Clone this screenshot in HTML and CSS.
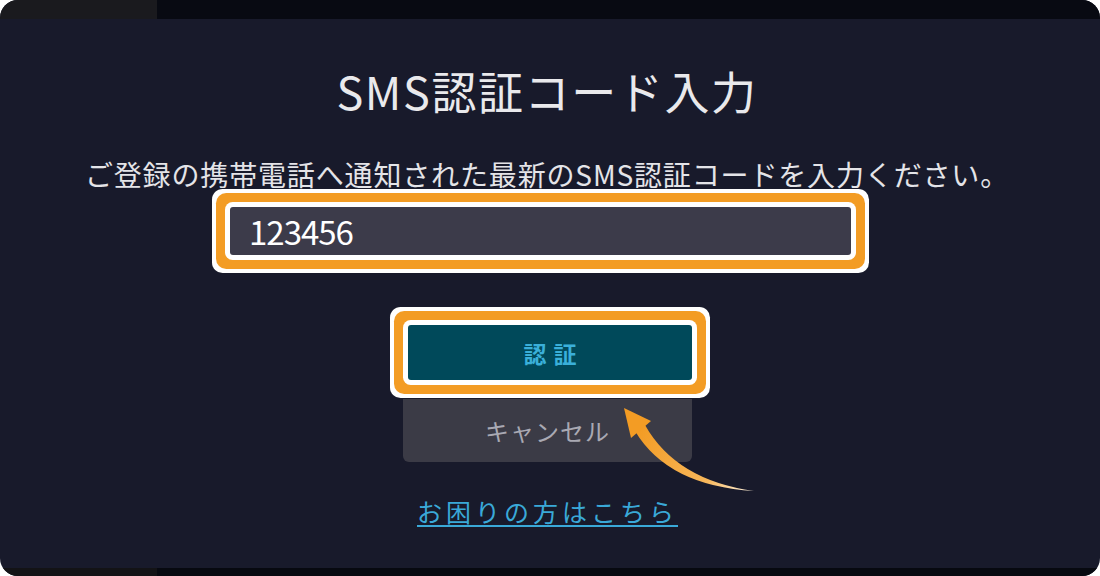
FILE: index.html
```html
<!DOCTYPE html>
<html lang="ja">
<head>
<meta charset="utf-8">
<title>SMS認証コード入力</title>
<link rel="stylesheet" href="styles.css">
</head>
<body>
<div class="frame">
  <div class="bar bar-top"><div class="bar-tab"></div><div class="bar-rest"></div></div>
  <main class="dialog">
    <h1 class="title">SMS認証コード入力</h1>
    <p class="lead">ご登録の携帯電話へ通知された最新のSMS認証コードを入力ください。</p>
    <div class="field">123456</div>
    <button class="btn btn-primary">認証</button>
    <button class="btn btn-cancel">キャンセル</button>
    <a class="help" href="#">お困りの方はこちら</a>
  </main>
  <div class="bar bar-bottom"><div class="bar-tab"></div><div class="bar-rest"></div></div>
  <svg class="arrow" width="1100" height="576" viewBox="0 0 1100 576" aria-hidden="true">
    <defs>
      <linearGradient id="shaft" x1="753" y1="491" x2="640" y2="428" gradientUnits="userSpaceOnUse">
        <stop offset="0" stop-color="#fff4e2"/>
        <stop offset="0.35" stop-color="#f7b75a"/>
        <stop offset="1" stop-color="#f39c24"/>
      </linearGradient>
    </defs>
    <path d="M754 491 Q676 480 645 425 L635 431 Q668 486 754 491 Z" fill="url(#shaft)"/>
    <path d="M624 408 L651 421 L631 438 Z" fill="#f39c24"/>
  </svg>
</div>
</body>
</html>
```
FILE: styles.css
```css
html, body {
  margin: 0;
  padding: 0;
  background: #ffffff;
}
body {
  font-family: "Noto Sans CJK JP", "Noto Sans", sans-serif;
}
.frame {
  position: relative;
  width: 1100px;
  height: 576px;
  border-radius: 18px;
  overflow: hidden;
  background: #181a2b;
  display: flex;
  flex-direction: column;
}
.bar {
  display: flex;
  flex: none;
}
.bar-top { height: 19px; }
.bar-bottom { height: 8px; }
.bar-tab { width: 157px; }
.bar-rest { flex: 1; }
.bar-top .bar-tab { background: #1a1a1e; }
.bar-top .bar-rest { background: #080a12; }
.bar-bottom .bar-tab { background: #131316; }
.bar-bottom .bar-rest { background: #070910; }

.dialog {
  flex: 1;
  display: flex;
  flex-direction: column;
  align-items: center;
  padding-top: 49px;
}
.title {
  margin: 0;
  font-size: 45px;
  line-height: 45px;
  font-weight: 400;
  letter-spacing: 1.6px;
  color: #e9e9ec;
  margin-right: 6px;
}
.lead {
  margin: 47px 0 0;
  font-size: 28px;
  line-height: 28px;
  letter-spacing: 0.85px;
  color: #e4e4e8;
  margin-right: 6px;
}
.field {
  box-sizing: border-box;
  margin-top: 19px;
  margin-right: 19px;
  width: 621px;
  height: 48px;
  padding-left: 19px;
  background: #3c3b4a;
  border-radius: 3px;
  color: #ffffff;
  font-size: 33px;
  line-height: 48px;
  letter-spacing: -1px;
  box-shadow: 0 0 0 5px #ffffff, 0 0 0 14px #f39c24, 0 0 0 18px #ffffff;
}
.btn {
  border: 0;
  padding: 0;
  font-family: inherit;
  display: block;
}
.btn-primary {
  position: relative;
  z-index: 1;
  margin-top: 70px;
  width: 284px;
  height: 55px;
  border-radius: 3px;
  background: #00495a;
  color: #3aafd9;
  font-size: 23px;
  font-weight: 700;
  letter-spacing: 7px;
  text-indent: 7px;
  box-shadow: 0 0 0 5px #ffffff, 0 0 0 14px #f39c24, 0 0 0 18px #ffffff;
}
.btn-cancel {
  margin-top: 19px;
  margin-right: 5px;
  width: 289px;
  height: 63px;
  border-radius: 0 0 6px 6px;
  background: #3b3b46;
  color: #a9a9b3;
  font-size: 24px;
  letter-spacing: 1px;
}
.help {
  margin-top: 35px;
  font-size: 25px;
  line-height: 28px;
  letter-spacing: 4px;
  color: #3aa9d8;
  text-decoration: underline;
  text-decoration-thickness: 2px;
  text-underline-offset: 3px;
  margin-right: 5px;
}
.arrow {
  position: absolute;
  left: 0;
  top: 0;
  pointer-events: none;
}
```
